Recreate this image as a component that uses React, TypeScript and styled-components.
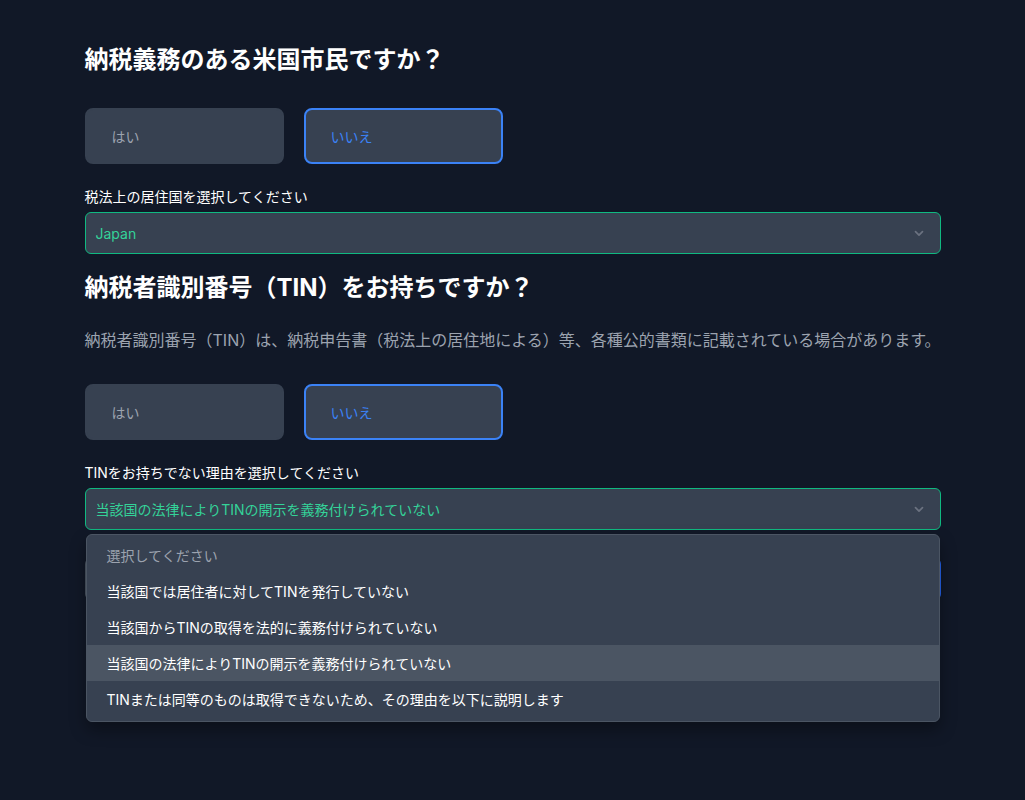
import React, { useState } from 'react'
import styled, { createGlobalStyle } from 'styled-components'

const GlobalStyle = createGlobalStyle`
  html, body {
    margin: 0;
    padding: 0;
    background: #111827;
  }
  body {
    font-family: "Inter", "Noto Sans CJK JP", sans-serif;
    color: #ffffff;
  }
`

const Page = styled.div`
  min-height: 800px;
  background: #111827;
  padding-top: 44px;
  box-sizing: border-box;
`

const Form = styled.div`
  width: 856px;
  margin: 0 auto;
  display: flex;
  flex-direction: column;
`

const Heading = styled.h2<{ $top?: number }>`
  margin: ${p => p.$top || 0}px 0 0;
  font-size: 24px;
  line-height: 32px;
  font-weight: 700;
  color: #ffffff;
`

const Description = styled.p`
  margin: 24px 0 0;
  font-size: 16px;
  line-height: 24px;
  color: #9ca3af;
  white-space: nowrap;
`

const Choices = styled.div`
  display: flex;
  gap: 20px;
  margin-top: 32px;
`

const Choice = styled.button<{ $active?: boolean }>`
  width: 199px;
  height: 56px;
  box-sizing: border-box;
  padding: 0 0 0 25px;
  text-align: left;
  border-radius: 8px;
  background: #374151;
  border: 2px solid ${p => (p.$active ? '#3b82f6' : '#374151')};
  color: ${p => (p.$active ? '#3b82f6' : '#9ca3af')};
  font-family: inherit;
  font-size: 14px;
  cursor: pointer;
`

const Field = styled.div`
  position: relative;
  display: flex;
  flex-direction: column;
  margin-top: 23px;
`

const Label = styled.label`
  font-size: 14px;
  line-height: 20px;
  font-weight: 400;
  color: #ffffff;
  margin-bottom: 5px;
`

const Select = styled.div`
  height: 42px;
  box-sizing: border-box;
  display: flex;
  align-items: center;
  justify-content: space-between;
  padding: 0 14px 0 10px;
  background: #374151;
  border: 1px solid #10b981;
  border-radius: 6px;
  color: #34d399;
  font-size: 14px;
  font-weight: 400;
`

const Chevron = () => (
  <svg width="14" height="14" viewBox="0 0 20 20" fill="none">
    <path d="M5 8l5 5 5-5" stroke="#6b7280" strokeWidth="2.4" strokeLinecap="round" strokeLinejoin="round" />
  </svg>
)

const Actions = styled.div`
  display: flex;
  justify-content: space-between;
  margin-top: 28px;
  margin-bottom: 120px;
`

const ActionButton = styled.button<{ $primary?: boolean }>`
  height: 42px;
  width: 160px;
  border: none;
  border-radius: 6px;
  background: ${p => (p.$primary ? '#2563eb' : '#4b5563')};
`

const Menu = styled.ul`
  position: absolute;
  top: calc(100% + 4px);
  left: 1px;
  right: 1px;
  margin: 0;
  padding: 2px 0 4px;
  list-style: none;
  background: #374151;
  border: 1px solid #4b5563;
  border-radius: 6px;
  box-shadow: 0 8px 16px rgba(0, 0, 0, 0.35);
  z-index: 10;
`

const MenuItem = styled.li<{ $placeholder?: boolean; $highlight?: boolean }>`
  height: 36px;
  display: flex;
  align-items: center;
  padding: 0 20px;
  font-size: 14px;
  font-weight: 400;
  color: ${p => (p.$placeholder ? '#9ca3af' : '#ffffff')};
  background: ${p => (p.$highlight ? '#4b5563' : 'transparent')};
`

const reasons = [
  '当該国では居住者に対してTINを発行していない',
  '当該国からTINの取得を法的に義務付けられていない',
  '当該国の法律によりTINの開示を義務付けられていない',
  'TINまたは同等のものは取得できないため、その理由を以下に説明します',
]

export default function App() {
  const [citizen, setCitizen] = useState(false)
  const [hasTin, setHasTin] = useState(false)
  const selected = reasons[2]

  return (
    <Page>
      <GlobalStyle />
      <Form>
        <Heading>納税義務のある米国市民ですか？</Heading>
        <Choices>
          <Choice $active={citizen} onClick={() => setCitizen(true)}>はい</Choice>
          <Choice $active={!citizen} onClick={() => setCitizen(false)}>いいえ</Choice>
        </Choices>

        <Field>
          <Label>税法上の居住国を選択してください</Label>
          <Select>
            <span>Japan</span>
            <Chevron />
          </Select>
        </Field>

        <Heading $top={18}>納税者識別番号（TIN）をお持ちですか？</Heading>
        <Description>
          納税者識別番号（TIN）は、納税申告書（税法上の居住地による）等、各種公的書類に記載されている場合があります。
        </Description>
        <Choices>
          <Choice $active={hasTin} onClick={() => setHasTin(true)}>はい</Choice>
          <Choice $active={!hasTin} onClick={() => setHasTin(false)}>いいえ</Choice>
        </Choices>

        <Field>
          <Label>TINをお持ちでない理由を選択してください</Label>
          <Select>
            <span>{selected}</span>
            <Chevron />
          </Select>
          <Menu>
            <MenuItem $placeholder>選択してください</MenuItem>
            {reasons.map(r => (
              <MenuItem key={r} $highlight={r === selected}>{r}</MenuItem>
            ))}
          </Menu>
        </Field>

        <Actions>
          <ActionButton aria-label="戻る" />
          <ActionButton $primary aria-label="次へ" />
        </Actions>
      </Form>
    </Page>
  )
}
